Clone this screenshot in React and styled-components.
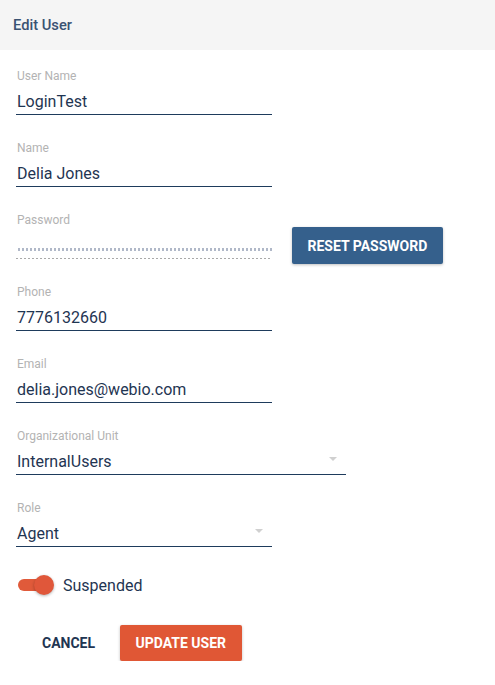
import styled, { createGlobalStyle } from 'styled-components';

const GlobalStyle = createGlobalStyle`
  body {
    margin: 0;
    background: #ffffff;
    font-family: Roboto, "Liberation Sans", sans-serif;
  }
`;

const Header = styled.div`
  height: 50px;
  background: #f5f5f5;
  display: flex;
  align-items: center;
  padding-left: 13px;
  font-size: 14.7px;
  font-weight: 500;
  color: #3a5272;
`;

const Form = styled.div`
  padding: 19px 0 0 16px;
  display: flex;
  flex-direction: column;
`;

const FieldRow = styled.div`
  display: flex;
  align-items: flex-start;
  gap: 20px;
  margin-bottom: 26px;
`;

const Field = styled.div`
  width: ${p => p.width || 256}px;
  display: flex;
  flex-direction: column;
`;

const Label = styled.div`
  font-size: 12px;
  line-height: 14px;
  color: #b3b3b3;
  padding-left: 1px;
`;

const Value = styled.div`
  position: relative;
  margin-top: 9px;
  padding: 0 0 2px 1px;
  font-size: 16px;
  line-height: 20px;
  color: #1f3552;
  border-bottom: 1px solid #1e3b5c;
`;

const Masked = styled.div`
  margin-top: 8px;
  height: 20px;
  display: flex;
  align-items: center;
  background-image: linear-gradient(to right, #a9a9a9 2px, transparent 2px);
  background-size: 4px 1px;
  background-repeat: repeat-x;
  background-position: 0 bottom;
  padding-bottom: 4px;
`;

const Dots = styled.div`
  margin-top: 8px;
  margin-left: 1px;
  width: 100%;
  height: 3px;
  background-image: radial-gradient(circle, #b0b8c8 1.2px, transparent 1.4px);
  background-size: 4px 3px;
`;

const Arrow = styled.span`
  position: absolute;
  right: 9px;
  top: 5px;
  width: 0;
  height: 0;
  border-left: 4px solid transparent;
  border-right: 4px solid transparent;
  border-top: 4px solid #d0d0d0;
`;

const Button = styled.button`
  height: ${p => p.h || 36}px;
  padding: 0 ${p => p.px || 16}px;
  border: none;
  border-radius: 2px;
  background: ${p => p.bg || 'transparent'};
  color: ${p => (p.bg ? '#ffffff' : '#1f3552')};
  font-family: Roboto, "Liberation Sans", sans-serif;
  font-size: 14px;
  font-weight: 700;
  text-transform: uppercase;
  box-shadow: ${p => (p.bg ? '0 1px 3px rgba(0,0,0,0.25)' : 'none')};
  cursor: pointer;
`;

const ResetButton = styled(Button)`
  margin-top: 14px;
  margin-bottom: -6px;
`;

const ToggleRow = styled.div`
  display: flex;
  align-items: center;
  height: 24px;
  gap: 11px;
  margin-bottom: 28px;
  padding-left: 2px;
`;

const Track = styled.div`
  position: relative;
  width: 34px;
  height: 12px;
  border-radius: 6px;
  background: #e05a3a;
`;

const Thumb = styled.div`
  position: absolute;
  right: -2px;
  top: -4px;
  width: 20px;
  height: 20px;
  border-radius: 50%;
  background: #e0573a;
  box-shadow: 0 1px 3px rgba(0, 0, 0, 0.3);
`;

const ToggleLabel = styled.span`
  font-size: 16px;
  color: #1f3552;
`;

const Actions = styled.div`
  display: flex;
  align-items: center;
  gap: 9px;
  padding-left: 10px;
`;

function TextField({ label, value, width, select }) {
  return (
    <Field width={width}>
      <Label>{label}</Label>
      <Value>
        {value}
        {select && <Arrow />}
      </Value>
    </Field>
  );
}

export default function App() {
  return (
    <>
      <GlobalStyle />
      <Header>Edit User</Header>
      <Form>
        <FieldRow>
          <TextField label="User Name" value="LoginTest" />
        </FieldRow>
        <FieldRow>
          <TextField label="Name" value="Delia Jones" />
        </FieldRow>
        <FieldRow>
          <Field>
            <Label>Password</Label>
            <Masked>
              <Dots />
            </Masked>
          </Field>
          <ResetButton bg="#35608c" h={37} px={15.5}>Reset Password</ResetButton>
        </FieldRow>
        <FieldRow>
          <TextField label="Phone" value="7776132660" />
        </FieldRow>
        <FieldRow>
          <TextField label="Email" value="delia.jones@webio.com" />
        </FieldRow>
        <FieldRow>
          <TextField label="Organizational Unit" value="InternalUsers" width={330} select />
        </FieldRow>
        <FieldRow>
          <TextField label="Role" value="Agent" select />
        </FieldRow>
        <ToggleRow>
          <Track>
            <Thumb />
          </Track>
          <ToggleLabel>Suspended</ToggleLabel>
        </ToggleRow>
        <Actions>
          <Button>Cancel</Button>
          <Button bg="#e05735" px={15.5}>Update User</Button>
        </Actions>
      </Form>
    </>
  );
}
